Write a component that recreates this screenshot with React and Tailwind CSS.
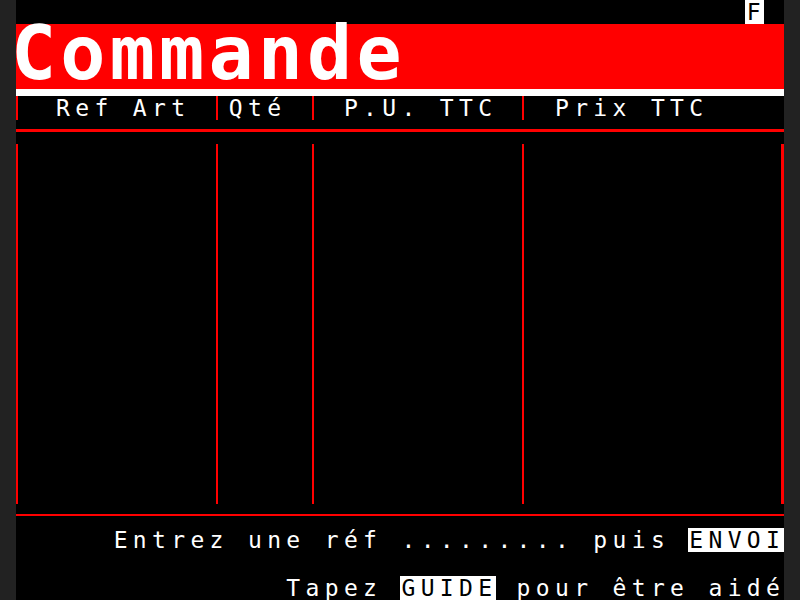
import React from 'react'

const BARS = {
  0: 'ml-0',
  10: 'ml-[8px]',
  15: 'ml-[8px]',
  26: 'ml-[6.8px]',
  39: 'ml-[16.8px]',
};

function place(parts) {
  const row = Array(40).fill(' ');
  parts.forEach(([col, str]) => {
    [...str].forEach((ch, i) => {
      row[col + i] = ch;
    });
  });
  return row;
}

function TextRow({ parts = [], inv = [], bars = [], height = 'h-6' }) {
  const chars = place(parts);
  return (
    <div className={`grid grid-cols-[repeat(40,19.2px)] ${height}`}>
      {chars.map((ch, i) => {
        if (bars.includes(i)) {
          return (
            <div key={i} className="h-full">
              <div className={`h-full w-[2.4px] bg-[#ff0000] ${BARS[i]}`} />
            </div>
          );
        }
        const isInv = inv.includes(i);
        return (
          <span
            key={i}
            className={`block h-6 pl-[1.7px] whitespace-pre leading-[24px] ${isInv ? 'bg-white text-black' : 'text-white'}`}
          >
            {ch}
          </span>
        );
      })}
    </div>
  );
}

function RuleRow({ offset }) {
  return (
    <div className="h-6">
      <div className={`h-[2.4px] w-full bg-[#ff0000] ${offset}`} />
    </div>
  );
}

export default function App() {
  return (
    <div className="w-[800px] h-[600px] bg-[#222222] flex justify-center overflow-hidden">
      <div className="w-[768px] h-[600px] bg-black flex flex-col text-[23px] font-['DejaVu_Sans_Mono',monospace]">
        {/* status line */}
        <TextRow parts={[[38, 'F']]} inv={[38]} />

        {/* title band */}
        <div className="h-[64.8px] bg-[#ff0000] flex items-start">
          <div className="text-white font-bold text-[75px] leading-[58px] tracking-[4.2px] -ml-[5px] whitespace-pre">
            Commande
          </div>
        </div>
        <div className="h-[7.2px] bg-white" />

        {/* table header */}
        <TextRow
          parts={[[2, 'Ref Art'], [11, 'Qté'], [17, 'P.U. TTC'], [28, 'Prix TTC']]}
          bars={[0, 10, 15, 26]}
        />
        <RuleRow offset="mt-[9.4px]" />

        {/* table body */}
        <TextRow bars={[0, 10, 15, 26, 39]} height="h-[360px]" />
        <RuleRow offset="mt-[9.6px]" />

        {/* prompts */}
        <TextRow parts={[[5, 'Entrez une réf ......... puis ENVOI']]} inv={[35, 36, 37, 38, 39]} />
        <div className="h-6" />
        <TextRow parts={[[14, 'Tapez GUIDE pour être aidé']]} inv={[20, 21, 22, 23, 24]} />
      </div>
    </div>
  );
}
